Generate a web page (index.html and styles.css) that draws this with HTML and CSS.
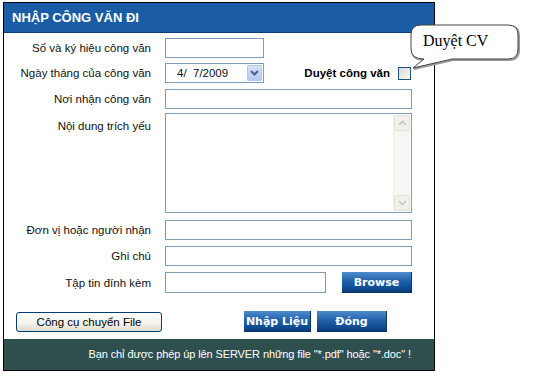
FILE: index.html
```html
<!DOCTYPE html>
<html lang="vi">
<head>
<meta charset="utf-8">
<link rel="stylesheet" href="styles.css">
</head>
<body>
<div class="frame">
  <div class="header">NHẬP CÔNG VĂN ĐI</div>
  <div class="form">
    <div class="row r1">
      <div class="label">Số và ký hiệu công văn</div>
      <div class="field"><div class="input short"></div></div>
    </div>
    <div class="row r2">
      <div class="label">Ngày tháng của công văn</div>
      <div class="field split">
        <div class="select"><span class="sel-text">4/  7/2009</span><span class="sel-btn"><svg width="9" height="6" viewBox="0 0 9 6"><path d="M1 1 L4.5 4.5 L8 1" fill="none" stroke="#4d6185" stroke-width="2"/></svg></span></div>
        <div class="approve"><span class="approve-label">Duyệt công văn</span><span class="checkbox"></span></div>
      </div>
    </div>
    <div class="row r3">
      <div class="label">Nơi nhận công văn</div>
      <div class="field"><div class="input"></div></div>
    </div>
    <div class="row r4 top">
      <div class="label">Nội dung trích yếu</div>
      <div class="field">
        <div class="textarea">
          <div class="ta-body"></div>
          <div class="scrollbar">
            <div class="sb-btn"><svg width="9" height="6" viewBox="0 0 9 6"><path d="M1 5 L4.5 1.5 L8 5" fill="none" stroke="#c6c5bf" stroke-width="1.6"/></svg></div>
            <div class="sb-track"></div>
            <div class="sb-btn"><svg width="9" height="6" viewBox="0 0 9 6"><path d="M1 1 L4.5 4.5 L8 1" fill="none" stroke="#c6c5bf" stroke-width="1.6"/></svg></div>
          </div>
        </div>
      </div>
    </div>
    <div class="row r5">
      <div class="label">Đơn vị hoặc người nhận</div>
      <div class="field"><div class="input"></div></div>
    </div>
    <div class="row r6">
      <div class="label">Ghi chú</div>
      <div class="field"><div class="input"></div></div>
    </div>
    <div class="row r7">
      <div class="label">Tập tin đính kèm</div>
      <div class="field split">
        <div class="input file"></div>
        <div class="btn-blue browse">Browse</div>
      </div>
    </div>
  </div>
  <div class="actions">
    <div class="btn-xp">Công cụ chuyển File</div>
    <div class="btn-blue submit">Nhập Liệu</div>
    <div class="btn-blue close">Đóng</div>
  </div>
  <div class="footer">Bạn chỉ được phép úp lên SERVER những file "*.pdf" hoặc "*.doc" !</div>
</div>
<svg class="callout" width="130" height="60" viewBox="400 15 130 60">
  <path d="M421,25 H508 Q518,25 518,35 V49 Q518,59 508,59 H452 L413,68 L424,59 Q411,59 411,49 V35 Q411,25 421,25 Z" fill="none" stroke="#9a9a9a" stroke-width="2" transform="translate(1,1)"/>
  <path d="M421,25 H508 Q518,25 518,35 V49 Q518,59 508,59 H452 L413,68 L424,59 Q411,59 411,49 V35 Q411,25 421,25 Z" fill="#fff" stroke="#444" stroke-width="1"/>
  <text x="423" y="46" class="callout-text">Duyệt CV</text>
</svg>
</body>
</html>
```

FILE: styles.css
```css
html, body {
  margin: 0;
  padding: 0;
  background: #fff;
}
body {
  font-family: "Liberation Sans", Arial, sans-serif;
  font-size: 11.5px;
  color: #111;
  position: relative;
  width: 556px;
  height: 386px;
  overflow: hidden;
}
.frame {
  margin: 2px 0 0 3px;
  width: 430px;
  border: 1px solid #000;
  background: #fff;
}
.header {
  height: 29px;
  background: #1b5ca6;
  border-bottom: 1px solid #0e3e78;
  color: #fff;
  font-weight: bold;
  font-size: 13px;
  line-height: 30px;
  padding-left: 8px;
}
.form {
  padding: 0 22px 0 0;
}
.row {
  display: flex;
  align-items: center;
}
.row.top {
  align-items: flex-start;
}
.r1 { margin-top: 5px; }
.r2 { margin-top: 5px; }
.r3 { margin-top: 6px; }
.r4 { margin-top: 4px; }
.r5 { margin-top: 7px; }
.r6 { margin-top: 6px; }
.r7 { margin-top: 6px; }
.label {
  width: 147px;
  margin-right: 14px;
  text-align: right;
  line-height: 20px;
  white-space: nowrap;
}
.row.top .label {
  padding-top: 3px;
}
.field {
  flex: 1;
  display: flex;
}
.split {
  align-items: center;
}
.input {
  height: 18px;
  border: 1px solid #7f9db9;
  background: #fff;
  flex: 1;
}
.input.short {
  flex: 0 0 97px;
}
.input.file {
  flex: 0 0 159px;
  height: 19px;
}
.select {
  width: 97px;
  height: 18px;
  border: 1px solid #7f9db9;
  display: flex;
  align-items: center;
  justify-content: space-between;
}
.sel-text {
  white-space: pre;
  padding-left: 11px;
  font-size: 11.5px;
}
.sel-btn {
  width: 15px;
  height: 16px;
  margin-right: 1px;
  border: 1px solid #b3c7f3;
  box-sizing: border-box;
  background: linear-gradient(#d6e2fc, #b4c9f5);
  border-radius: 1px;
  display: flex;
  align-items: center;
  justify-content: center;
}
.approve {
  margin-left: auto;
  display: flex;
  align-items: center;
  margin-right: 1px;
}
.approve-label {
  font-weight: bold;
  font-size: 11.5px;
  color: #000;
}
.checkbox {
  width: 11px;
  height: 11px;
  margin-left: 8px;
  border: 1px solid #1c5180;
  background: linear-gradient(135deg, #dcdcd4, #fbfbf9);
}
.textarea {
  flex: 1;
  height: 96px;
  border: 1px solid #7f9db9;
  display: flex;
  padding: 1px;
}
.ta-body {
  flex: 1;
}
.scrollbar {
  width: 16px;
  display: flex;
  flex-direction: column;
  background: #f7f6f2;
  border-left: 1px solid #f0efe9;
}
.sb-track {
  flex: 1;
}
.sb-btn {
  background: #f1f0ea;
  border: 1px solid #e4e2d8;
  border-radius: 2px;
  box-sizing: border-box;
  height: 16px;
  display: flex;
  align-items: center;
  justify-content: center;
}
.btn-blue {
  height: 21px;
  box-sizing: border-box;
  background: linear-gradient(#4f8bcd 0%, #1f60aa 45%, #0f4a90 80%, #0a3568 100%);
  border-right: 1px solid #0a3568;
  color: #fff;
  font-family: "DejaVu Sans", Verdana, sans-serif;
  font-weight: bold;
  font-size: 11px;
  display: flex;
  align-items: center;
  justify-content: center;
}
.browse {
  margin-left: auto;
  width: 70px;
}
.actions {
  display: flex;
  align-items: center;
  margin-top: 18px;
  padding-left: 12px;
}
.btn-xp {
  width: 146px;
  height: 20px;
  box-sizing: border-box;
  border: 1px solid #003c74;
  border-radius: 3px;
  background: linear-gradient(#ffffff, #f3f2ec 60%, #dedbcc);
  display: flex;
  align-items: center;
  justify-content: center;
  font-size: 11.5px;
  color: #000;
}
.submit {
  margin-left: 82px;
  width: 67px;
}
.close {
  margin-left: 6px;
  width: 70px;
}
.footer {
  margin-top: 7px;
  height: 31px;
  background: #2f4f4f;
  color: #fff;
  text-align: right;
  padding-right: 23px;
  line-height: 31px;
  font-size: 11px;
  letter-spacing: -0.1px;
}
.callout {
  position: absolute;
  left: 400px;
  top: 15px;
}
.callout-text {
  font-family: "Liberation Serif", "Times New Roman", serif;
  font-size: 16px;
  fill: #000;
}
```
